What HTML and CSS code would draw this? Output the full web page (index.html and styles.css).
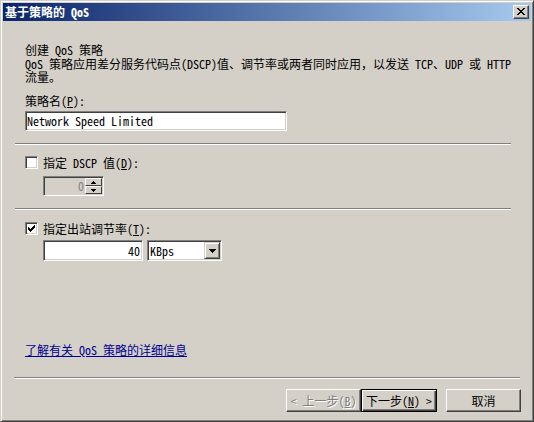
FILE: index.html
```html
<!DOCTYPE html>
<html lang="zh-CN">
<head>
<meta charset="utf-8">
<title>基于策略的 QoS</title>
<link rel="stylesheet" href="styles.css">
</head>
<body>
<div class="window">
  <div class="titlebar">
    <span class="title">基于策略的 QoS</span>
    <span class="close">
      <svg width="8" height="7" viewBox="0 0 8 7" shape-rendering="crispEdges"><path fill="#000" d="M0 0h2v1h-2z M6 0h2v1h-2z M1 1h2v1h-2z M5 1h2v1h-2z M2 2h4v1h-4z M3 3h2v1h-2z M2 4h4v1h-4z M1 5h2v1h-2z M5 5h2v1h-2z M0 6h2v1h-2z M6 6h2v1h-2z"/></svg>
    </span>
  </div>
  <div class="content">
    <div class="line">创建 QoS 策略</div>
    <div class="desc">QoS 策略应用差分服务代码点(DSCP)值、调节率或两者同时应用，以发送 TCP、UDP 或 HTTP<br>流量。</div>
    <div class="line label">策略名(<u>P</u>):</div>
    <div class="textbox name">Network Speed Limited</div>
    <div class="sep"></div>
    <div class="check first"><span class="box"></span><span>指定 DSCP 值(<u>D</u>):</span></div>
    <div class="spinner">
      <span class="spin-value">0</span>
      <span class="spin-btns">
        <span class="spin-btn"><svg width="5" height="3" viewBox="0 0 5 3" shape-rendering="crispEdges"><path fill="#000" d="M2 0h1v1h-1z M1 1h3v1h-3z M0 2h5v1h-5z"/></svg></span>
        <span class="spin-btn"><svg width="5" height="3" viewBox="0 0 5 3" shape-rendering="crispEdges"><path fill="#000" d="M0 0h5v1h-5z M1 1h3v1h-3z M2 2h1v1h-1z"/></svg></span>
      </span>
    </div>
    <div class="sep"></div>
    <div class="check second"><span class="box"><svg width="7" height="7" viewBox="0 0 7 7" shape-rendering="crispEdges"><path fill="#000" d="M0 2h1v3h-1z M1 3h1v3h-1z M2 4h1v3h-1z M3 3h1v3h-1z M4 2h1v3h-1z M5 1h1v3h-1z M6 0h1v3h-1z"/></svg></span><span>指定出站调节率(<u>T</u>):</span></div>
    <div class="rate-row">
      <div class="textbox rate">40</div>
      <div class="combo">
        <span class="combo-text">KBps</span>
        <span class="drop"><svg width="7" height="4" viewBox="0 0 7 4" shape-rendering="crispEdges"><path fill="#000" d="M0 0h7v1h-7z M1 1h5v1h-5z M2 2h3v1h-3z M3 3h1v1h-1z"/></svg></span>
      </div>
    </div>
    <a class="line link" href="#">了解有关 QoS 策略的详细信息</a>
    <div class="sep bottom"></div>
    <div class="buttons">
      <span class="btn disabled">&lt; 上一步(<u>B</u>)</span>
      <span class="btn default">下一步(<u>N</u>) &gt;</span>
      <span class="btn cancel">取消</span>
    </div>
  </div>
</div>
</body>
</html>
```

FILE: styles.css
```css
* {
  box-sizing: border-box;
  margin: 0;
  padding: 0;
}

body {
  margin: 0;
  width: 534px;
  height: 422px;
  overflow: hidden;
  background: #D4D0C8;
  color: #000;
  font-family: "Noto Sans Mono CJK SC", "Noto Sans CJK SC", sans-serif;
  font-size: 12px;
  line-height: 12px;
}

.window {
  width: 534px;
  height: 422px;
  background: #D4D0C8;
  border: 1px solid;
  border-color: #D4D0C8 #404040 #404040 #D4D0C8;
  box-shadow: inset 1px 1px #FFFFFF, inset -1px -1px #808080;
  padding: 2px;
  display: flex;
  flex-direction: column;
}

.titlebar {
  height: 18px;
  flex: none;
  background: linear-gradient(90deg, #0A246A, #A6CAF0);
  display: flex;
  align-items: center;
  justify-content: space-between;
  padding: 0 2px 0 2px;
}

.title {
  color: #FFFFFF;
  font-weight: bold;
  line-height: 12px;
}

.close {
  width: 16px;
  height: 14px;
  background: #D4D0C8;
  border: 1px solid;
  border-color: #FFFFFF #404040 #404040 #FFFFFF;
  box-shadow: inset -1px -1px #808080;
  display: flex;
  align-items: center;
  justify-content: center;
  padding: 0 1px 1px 0;
}

.close svg { display: block; }

.content {
  padding: 23px 0 0 22px;
  display: flex;
  flex-direction: column;
  align-items: flex-start;
}

.line {
  height: 12px;
  white-space: nowrap;
}

.desc {
  margin-top: 1px;
  line-height: 13px;
  white-space: nowrap;
}

.label {
  margin-top: 12px;
}

.textbox {
  background: #FFFFFF;
  border: 1px solid;
  border-color: #808080 #FFFFFF #FFFFFF #808080;
  box-shadow: inset 1px 1px #404040, inset -1px -1px #D4D0C8;
  white-space: nowrap;
}

.name {
  margin-top: 4px;
  width: 262px;
  height: 20px;
  line-height: 18px;
  padding-left: 1px;
}

.sep {
  margin: 12px 0 0 -10px;
  width: 496px;
  height: 2px;
  border-top: 1px solid #808080;
  border-bottom: 1px solid #FFFFFF;
  flex: none;
}

.check {
  height: 13px;
  display: flex;
  align-items: center;
  gap: 5px;
  white-space: nowrap;
}

.check.first { margin-top: 11px; }
.check.second { margin-top: 12px; }

.box {
  width: 13px;
  height: 13px;
  flex: none;
  background: #FFFFFF;
  border: 1px solid;
  border-color: #808080 #FFFFFF #FFFFFF #808080;
  box-shadow: inset 1px 1px #404040, inset -1px -1px #D4D0C8;
  display: flex;
  align-items: center;
  justify-content: center;
}

.box svg { display: block; }

.spinner {
  margin: 7px 0 0 18px;
  width: 61px;
  height: 20px;
  background: #D4D0C8;
  border: 1px solid;
  border-color: #808080 #FFFFFF #FFFFFF #808080;
  box-shadow: inset 1px 1px #404040, inset -1px -1px #D4D0C8;
  padding: 1px;
  display: flex;
}

.spin-value {
  flex: 1;
  text-align: right;
  color: #808080;
  line-height: 16px;
  padding-right: 1px;
}

.spin-btns {
  width: 17px;
  display: flex;
  flex-direction: column;
}

.spin-btn {
  height: 8px;
  background: #D4D0C8;
  border: 1px solid;
  border-color: #FFFFFF #404040 #404040 #FFFFFF;
  display: flex;
  align-items: center;
  justify-content: center;
}

.spin-btn svg { display: block; }

.rate-row {
  margin: 5px 0 0 18px;
  display: flex;
  gap: 4px;
}

.rate {
  width: 100px;
  height: 21px;
  line-height: 19px;
  text-align: right;
  padding-right: 2px;
}

.combo {
  width: 75px;
  height: 21px;
  background: #FFFFFF;
  border: 1px solid;
  border-color: #808080 #FFFFFF #FFFFFF #808080;
  box-shadow: inset 1px 1px #404040, inset -1px -1px #D4D0C8;
  padding: 1px;
  display: flex;
}

.combo-text {
  flex: 1;
  line-height: 17px;
  padding-left: 1px;
}

.drop {
  width: 16px;
  height: 17px;
  background: #D4D0C8;
  border: 1px solid;
  border-color: #D4D0C8 #404040 #404040 #D4D0C8;
  box-shadow: inset 1px 1px #FFFFFF, inset -1px -1px #808080;
  display: flex;
  align-items: center;
  justify-content: center;
}

.drop svg { display: block; }

.link {
  margin-top: 83px;
  color: #000090;
  text-decoration: underline;
}

.sep.bottom {
  margin: 21px 0 0 -11px;
  width: 506px;
}

.buttons {
  margin-top: 10px;
  align-self: stretch;
  display: flex;
  justify-content: flex-end;
  padding-right: 10px;
}

.btn {
  width: 75px;
  height: 23px;
  background: #D4D0C8;
  border: 1px solid;
  border-color: #FFFFFF #404040 #404040 #FFFFFF;
  box-shadow: inset -1px -1px #808080;
  display: flex;
  align-items: center;
  justify-content: center;
  white-space: nowrap;
}

.btn.disabled {
  color: #808080;
  text-shadow: 1px 1px #FFFFFF;
}

.btn.default {
  width: 76px;
  border-color: #000000;
  box-shadow: inset 1px 1px #FFFFFF, inset -1px -1px #404040, inset -2px -2px #808080;
}

.btn.cancel {
  margin-left: 9px;
}
```
